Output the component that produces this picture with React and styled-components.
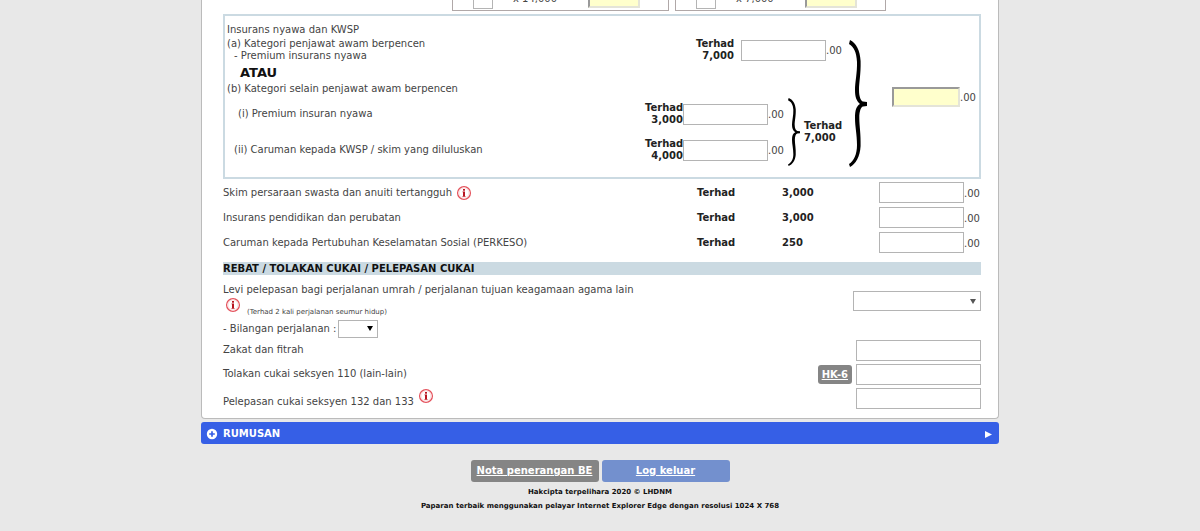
import React from 'react'
import styled, { createGlobalStyle } from 'styled-components'

const InfoIcon = () => (
  <svg width="16" height="16" viewBox="0 0 16 16" aria-hidden="true">
    <circle cx="8" cy="8" r="6.400" fill="#fff" stroke="#e4525c" strokeWidth="1.300" />
    <circle cx="8" cy="8" r="5" fill="none" stroke="#fbdcde" strokeWidth="1" />
    <rect x="7" y="4" width="2" height="1.700" fill="#b81420" />
    <path d="M6.500 6.500H9V11H9.500V11.800H6.500V11H7V7.300H6.500Z" fill="#b81420" />
  </svg>
)

const Brace = ({ width, height }) => (
  <svg width={width} height={height} viewBox="0 0 18 127" preserveAspectRatio="none" aria-hidden="true">
    <path
      fill="#000"
      d="M1 0C7 3 11 10 11.600 21C12 34 10 42 10 50C10 57 12 61 14 61.500L18 62V66L14 66.500C12 67 10.300 71 10.300 78C10.300 86 12 94 11.600 106C11 117 6.500 124 1 127L0 124C5 121 8 114 8 105C8 94 6 87 6 78C6 70 7.500 66 11 64C7.500 61 6 57 6 50C6 42 8.300 33 8 22C7.500 12 5 7 0 4Z"
    />
  </svg>
)

const Limit = ({ amount, align }) => (
  <LimitText $align={align}>
    Terhad
    <br />
    {amount}
  </LimitText>
)

const reliefs = [
  { id: 'skim', label: 'Skim persaraan swasta dan anuiti tertangguh', limit: '3,000', info: true },
  { id: 'pendidikan', label: 'Insurans pendidikan dan perubatan', limit: '3,000' },
  { id: 'perkeso', label: 'Caruman kepada Pertubuhan Keselamatan Sosial (PERKESO)', limit: '250' },
]

const App = () => {
  return (
    <>
      <GlobalStyle />
      <Page>
        <Sheet>
          <ChildRow>
            <ChildBox>
              <Field $width="20px" aria-label="Bilangan anak x 14,000" />
              <ChildRate>x 14,000</ChildRate>
              <TotalField $width="52px" readOnly aria-label="Jumlah 14,000" />
            </ChildBox>
            <ChildBox>
              <Field $width="20px" aria-label="Bilangan anak x 7,000" />
              <ChildRate>x 7,000</ChildRate>
              <TotalField $width="52px" readOnly aria-label="Jumlah 7,000" />
            </ChildBox>
          </ChildRow>

          <InsuranceBox>
            <InsuranceMain>
              <div>Insurans nyawa dan KWSP</div>
              <Between $top="2px">
                <label htmlFor="premiumA">
                  (a) Kategori penjawat awam berpencen
                  <Indent $left="7px">- Premium insurans nyawa</Indent>
                </label>
                <Amount>
                  <Limit amount="7,000" align="right" />
                  <Gap />
                  <Field id="premiumA" />
                  <Cents>.00</Cents>
                </Amount>
              </Between>
              <Or>ATAU</Or>
              <div>(b) Kategori selain penjawat awam berpencen</div>
              <Between $top="3px">
                <OptionRows>
                  <Between>
                    <Indent as="label" $left="11px" htmlFor="premiumB">(i) Premium insuran nyawa</Indent>
                    <Amount>
                      <Limit amount="3,000" align="right" />
                      <Field id="premiumB" />
                      <Cents>.00</Cents>
                    </Amount>
                  </Between>
                  <Between>
                    <Indent as="label" $left="7px" htmlFor="kwsp">(ii) Caruman kepada KWSP / skim yang diluluskan</Indent>
                    <Amount>
                      <Limit amount="4,000" align="right" />
                      <Field id="kwsp" />
                      <Cents>.00</Cents>
                    </Amount>
                  </Between>
                </OptionRows>
                <Brace width={12} height={68} />
                <Limit amount="7,000" />
              </Between>
            </InsuranceMain>
            <BraceHolder>
              <Brace width={18} height={127} />
            </BraceHolder>
            <InsuranceTotal>
              <TotalField $width="68px" readOnly aria-label="Jumlah insurans nyawa dan KWSP" />
              <Cents>.00</Cents>
            </InsuranceTotal>
          </InsuranceBox>

          {reliefs.map((relief) => (
            <ReliefRow key={relief.id}>
              <LabelLine>
                <label htmlFor={relief.id}>{relief.label}</label>
                {relief.info && <InfoIcon />}
              </LabelLine>
              <Strong>Terhad</Strong>
              <Strong>{relief.limit}</Strong>
              <Amount>
                <Field id={relief.id} />
                <Cents>.00</Cents>
              </Amount>
            </ReliefRow>
          ))}

          <SectionTitle>REBAT / TOLAKAN CUKAI / PELEPASAN CUKAI</SectionTitle>

          <LevyRow>
            <div>
              <label htmlFor="levi">Levi pelepasan bagi perjalanan umrah / perjalanan tujuan keagamaan agama lain</label>
              <NoteLine>
                <InfoIcon />
                <Note>(Terhad 2 kali perjalanan seumur hidup)</Note>
              </NoteLine>
              <TripLine>
                <label htmlFor="trips">- Bilangan perjalanan :</label>
                <SelectBox $width="40px" $height="18px">
                  <select id="trips" defaultValue=""><option value=""></option></select>
                </SelectBox>
              </TripLine>
            </div>
            <SelectBox $width="128px" $height="20px" $muted>
              <select id="levi" defaultValue=""><option value=""></option></select>
            </SelectBox>
          </LevyRow>
          <RebateRow>
            <label htmlFor="zakat">Zakat dan fitrah</label>
            <Field id="zakat" $width="125px" />
          </RebateRow>
          <RebateRow>
            <label htmlFor="s110">Tolakan cukai seksyen 110 (lain-lain)</label>
            <Amount>
              <HelpLink href="#hk6">HK-6</HelpLink>
              <Field id="s110" $width="125px" />
            </Amount>
          </RebateRow>
          <RebateRow>
            <LowLabel>
              <label htmlFor="s132">Pelepasan cukai seksyen 132 dan 133</label>
              <InfoIcon />
            </LowLabel>
            <Field id="s132" $width="125px" />
          </RebateRow>
        </Sheet>

        <SummaryBar type="button">
          <svg width="12" height="12" viewBox="0 0 12 12" aria-hidden="true">
            <circle cx="6" cy="6" r="5.200" fill="#fff" />
            <path d="M6 3.200V8.800M3.200 6H8.800" stroke="#365fe6" strokeWidth="1.700" />
          </svg>
          <SummaryText>RUMUSAN</SummaryText>
          <svg width="8" height="8" viewBox="0 0 8 8" aria-hidden="true">
            <path d="M1 1L8 4.500L1 8Z" fill="#fff" />
          </svg>
        </SummaryBar>

        <Actions>
          <ActionLink href="#nota">Nota penerangan BE</ActionLink>
          <ActionLink href="#keluar" $blue>Log keluar</ActionLink>
        </Actions>
        <Footer>
          <div>Hakcipta terpelihara 2020 © LHDNM</div>
          <div>Paparan terbaik menggunakan pelayar Internet Explorer Edge dengan resolusi 1024 X 768</div>
        </Footer>
      </Page>
    </>
  )
}

const GlobalStyle = createGlobalStyle`
* {
  box-sizing: border-box;
}
body {
  margin: 0;
  background: #e8e8e8;
  color: #444;
  font: 10px/12px Verdana, "DejaVu Sans", sans-serif;
}
svg {
  display: block;
  flex: none;
}
`
const Page = styled.div`
max-width: 798px;
margin: 0 auto;
`
const Sheet = styled.main`
background: white;
border: 1px solid #bbb;
border-top: 0;
border-radius: 0 0 4px 4px;
padding: 0 17px 8px 21px;
`
const ChildRow = styled.div`
display: flex;
align-items: flex-end;
justify-content: flex-end;
gap: 6px;
height: 11px;
padding-right: 95px;
overflow: hidden;
`
const ChildBox = styled.div`
display: flex;
align-items: center;
width: 217px;
height: 30px;
padding: 4px 28px 0 20px;
border: 1px solid #b0a8a8;

&:last-child {
  width: 211px;
}
`
const ChildRate = styled.span`
flex: 1;
padding: 2px 0 0 20px;
`
const Field = styled.input`
width: ${(p) => p.$width || '85px'};
height: 21px;
flex: none;
border: 1px solid #b4b4b4;
background: white;
padding: 1px 3px;
font: inherit;
`
const TotalField = styled(Field)`
height: 20px;
background: #ffffcc;
border: 2px solid;
border-color: #999 #e4e4d8 #e4e4d8 #999;
`
const InsuranceBox = styled.section`
display: flex;
border: 2px solid #cbdae2;
margin: 3px 0 1px;
padding: 8px 3px 10px 2px;
`
const InsuranceMain = styled.div`
flex: 1;
`
const Between = styled.div`
display: flex;
align-items: center;
justify-content: space-between;
gap: 4px;
margin-top: ${(p) => p.$top || 0};
`
const Indent = styled.div`
padding-left: ${(p) => p.$left};
`
const Amount = styled.div`
display: flex;
align-items: center;
`
const LimitText = styled.div`
width: 38px;
color: #222;
font-weight: bold;
text-align: ${(p) => p.$align || 'left'};
white-space: nowrap;
`
const Gap = styled.span`
width: 7px;
`
const Cents = styled.span`
width: 16px;
padding-top: 2px;
`
const Or = styled.div`
margin: 3px 0 2px;
padding-left: 13px;
color: #111;
font-size: 13px;
line-height: 16px;
font-weight: bold;
`
const OptionRows = styled.div`
flex: 1;
display: grid;
gap: 12px;
`
const BraceHolder = styled.div`
padding: 16px 25px 0 7px;
`
const InsuranceTotal = styled.div`
display: flex;
align-items: center;
align-self: flex-start;
padding-top: 63px;
`
const ReliefRow = styled.div`
display: grid;
grid-template-columns: 1fr 85px 97px 102px;
align-items: center;
height: 25px;
`
const LabelLine = styled.div`
display: flex;
align-items: flex-start;
gap: 4px;
height: 16px;
label {
  padding-top: 2px;
}
`
const Strong = styled.strong`
color: #222;
`
const SectionTitle = styled.h2`
margin: 7px 0 9px;
background: #cbdae2;
color: #111;
font-size: 10px;
line-height: 13px;
`
const LevyRow = styled.div`
display: flex;
justify-content: space-between;
align-items: flex-start;
> :last-child {
  margin-top: 7px;
}
`
const NoteLine = styled.div`
display: flex;
align-items: flex-start;
gap: 6px;
padding: 1px 0 0 2px;
height: 22px;
`
const Note = styled.span`
padding-top: 9px;
font-size: 7px;
`
const TripLine = styled.div`
display: flex;
align-items: center;
gap: 2px;
margin-top: 2px;
`
const SelectBox = styled.span`
position: relative;
width: ${(p) => p.$width};
height: ${(p) => p.$height};
select {
  appearance: none;
  display: block;
  width: 100%;
  height: 100%;
  border: 1px solid #b4b4b4;
  background: white;
  font: inherit;
}
&::after {
  content: "";
  position: absolute;
  right: 5px;
  top: ${(p) => (p.$muted ? '8px' : '6px')};
  border: 3px solid transparent;
  border-top: 5px solid ${(p) => (p.$muted ? '#555' : '#000')};
  border-bottom: 0;
  pointer-events: none;
}
`
const RebateRow = styled.div`
display: flex;
align-items: center;
justify-content: space-between;
height: 24px;
`
const LowLabel = styled.div`
display: flex;
align-items: flex-start;
gap: 4px;
label {
  padding-top: 8px;
}
`
const HelpLink = styled.a`
margin-right: 4px;
padding: 4px 4px 3px;
border-radius: 3px;
background: #858585;
color: white;
font-weight: bold;
`
const SummaryBar = styled.button`
display: flex;
align-items: center;
gap: 5px;
width: 100%;
height: 22px;
margin-top: 3px;
padding: 1px 7px 0 5px;
border: 0;
border-radius: 3px;
background: #365fe6;
color: white;
font: inherit;
font-weight: bold;
text-align: left;
`
const SummaryText = styled.span`
flex: 1;
`
const Actions = styled.div`
display: flex;
justify-content: center;
gap: 3px;
margin-top: 16px;
`
const ActionLink = styled.a`
width: 128px;
border-radius: 3px;
background: ${(p) => (p.$blue ? '#7390ce' : '#858585')};
color: white;
font-weight: bold;
line-height: 22px;
text-align: center;
`
const Footer = styled.footer`
margin-top: 3px;
color: #111;
font-size: 7px;
line-height: 14px;
font-weight: bold;
text-align: center;
`
export default App
